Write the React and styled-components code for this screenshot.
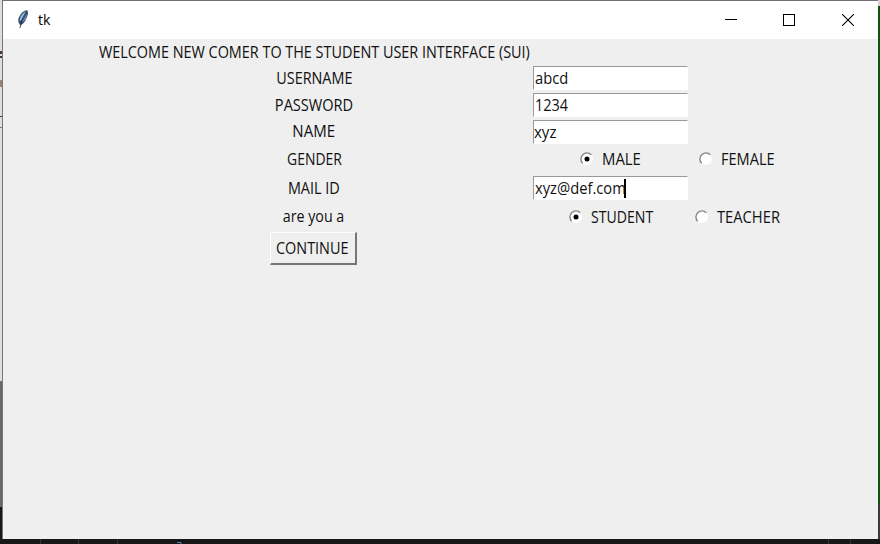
import React from "react";
import styled, { createGlobalStyle } from "styled-components";

const GlobalStyle = createGlobalStyle`
  * { box-sizing: border-box; }
  body { margin: 0; overflow: hidden; background: #171717; font-family: "Open Sans", "Noto Sans", sans-serif; }
`;

const Desktop = styled.div`
  display: grid;
  grid-template-columns: 3px 875px 2px;
  grid-template-rows: 539px 5px;
  width: 880px;
  height: 544px;
  background: #171717;
`;

const LeftEdge = styled.div`
  border-right: 1px solid #777;
  background: linear-gradient(#dedede 0 51px, #51304f 51px 54px, #dedede 54px 56px, #51304f 56px 58px, #dedede 58px 80px, #9b8573 80px 87px, #dedede 87px 116px, #333 116px 117px, #dedede 117px 127px, #777 127px 128px, #dedede 128px 381px, #686868 381px 507px, #171717 507px);
`;

const RightEdge = styled.div`
  background: linear-gradient(#d5d0d0 0 6px, #0c5412 6px 505px, #3b3b3b 505px);
`;

const BottomEdge = styled.div`
  grid-column: 1 / -1;
  svg { display: block; }
`;

const Window = styled.main`
  display: flex;
  flex-direction: column;
  border-top: 1px solid #737073;
  background: #efefef;
`;

const TitleBar = styled.header`
  display: flex;
  align-items: center;
  height: 38px;
  padding-left: 12px;
  background: #fff;
  color: #000;
`;

const Title = styled.span`
  margin-left: 8px;
  font-size: 14px;
  line-height: 20px;
`;

const Controls = styled.div`
  display: flex;
  margin-left: auto;
  margin-right: 1px;
`;

const ControlButton = styled.button`
  display: grid;
  place-items: center;
  width: 58.5px;
  height: 38px;
  padding: 0;
  border: 0;
  background: transparent;
`;

const Form = styled.form`
  display: grid;
  grid-template-columns: 434px 159px 95px;
  grid-template-rows: 26px 26px 28px 25px 30px 28px 29px 34px;
  place-items: center;
  margin-left: 94px;
`;

const Text = styled.span`
  display: block;
  flex: none;
  color: #111;
  font-size: 16px;
  line-height: 20px;
  white-space: nowrap;
  transform: scaleX(${(p) => p.$squeeze || 0.9});
  transform-origin: ${(p) => (p.$left ? "left" : "center")};
`;

const Label = styled(Text)`
  grid-column: 1;
  margin-top: -1px;
`;

const Entry = styled.div`
  grid-column: 2;
  display: flex;
  align-items: center;
  width: 155px;
  height: 24px;
  padding-left: ${(p) => p.$pad ?? 1}px;
  border: 1px solid #fff;
  border-top-color: #999;
  border-left-color: #999;
  background: #fff;
`;

const TextCursor = styled.i`
  width: 2px;
  height: 19px;
  margin-left: ${(p) => p.$offset}px;
  background: #000;
`;

const Option = styled.div`
  display: flex;
  align-items: center;
  justify-self: start;
  gap: 8px;
  margin-left: ${(p) => p.$indent}px;
`;

const ContinueButton = styled.button`
  display: grid;
  place-items: center;
  width: 87px;
  height: 33px;
  margin-right: 2px;
  padding: 0;
  border: 1px solid #fff;
  border-right: 2px solid #777;
  border-bottom: 2px solid #777;
  background: #efefef;
  font-family: inherit;
`;

const Feather = () => (
  <svg width="15" height="22" viewBox="0 0 15 22">
    <path d="M5 16 Q2 12 4 8 Q7 2 12 1 Q14 3 12 8 Q10 14 6 16Z" fill="#34506f" />
    <path d="M4.5 12 Q5 6 11 2 L10 6 L7 11Z" fill="#9ab9dc" />
    <path d="M6.5 14 L12 5 L11 10Z" fill="#6c91c0" />
    <path d="M11 3 Q6 10 5 19" fill="none" stroke="#172338" strokeWidth="0.8" />
  </svg>
);

const RadioMark = ({ checked }) => (
  <svg width="14" height="14" viewBox="0 0 14 14">
    <circle cx="7" cy="7" r="6" fill="#fff" />
    <path d="M2.7 11.3 A6 6 0 0 1 11.3 2.7" fill="none" stroke="#858585" strokeWidth="1.4" />
    {checked && <circle cx="7" cy="7" r="2.5" fill="#000" />}
  </svg>
);

const Radio = ({ children, checked, indent, squeeze }) => (
  <Option role="radio" aria-checked={!!checked} $indent={indent}>
    <RadioMark checked={checked} />
    <Text $left $squeeze={squeeze}>{children}</Text>
  </Option>
);

export default function App() {
  return (
    <>
      <GlobalStyle />
      <Desktop>
        <LeftEdge />
        <Window>
          <TitleBar>
            <Feather />
            <Title>tk</Title>
            <Controls>
              <ControlButton aria-label="Minimize">
                <svg width="12" height="12"><path d="M0 5.5H12" stroke="#000" /></svg>
              </ControlButton>
              <ControlButton aria-label="Maximize">
                <svg width="12" height="12"><rect x=".5" y=".5" width="11" height="11" fill="none" stroke="#000" /></svg>
              </ControlButton>
              <ControlButton aria-label="Close">
                <svg width="12" height="12"><path d="M0 0L12 12M12 0L0 12" stroke="#000" strokeWidth="1.1" /></svg>
              </ControlButton>
            </Controls>
          </TitleBar>
          <Form>
            <Label>WELCOME NEW COMER TO THE STUDENT USER INTERFACE (SUI)</Label>
            <Label>USERNAME</Label>
            <Entry><Text $left $squeeze={0.92}>abcd</Text></Entry>
            <Label $squeeze={0.91}>PASSWORD</Label>
            <Entry><Text $left>1234</Text></Entry>
            <Label $squeeze={0.94}>NAME</Label>
            <Entry $pad={0}><Text $left $squeeze={0.94}>xyz</Text></Entry>
            <Label $squeeze={0.87}>GENDER</Label>
            <Radio checked indent={48.5} squeeze={0.93}>MALE</Radio>
            <Radio indent={8.5} squeeze={0.91}>FEMALE</Radio>
            <Label>MAIL ID</Label>
            <Entry $pad={0.5}><Text $left $squeeze={0.92}>xyz@def.com</Text><TextCursor $offset={-9} /></Entry>
            <Label $squeeze={0.89}>are you a</Label>
            <Radio checked indent={37.5} squeeze={0.88}>STUDENT</Radio>
            <Radio indent={4.5} squeeze={0.92}>TEACHER</Radio>
            <ContinueButton type="button"><Text>CONTINUE</Text></ContinueButton>
          </Form>
        </Window>
        <RightEdge />
        <BottomEdge>
          <svg width="880" height="5">
            <path d="M40.5 0V5M78.5 0V5M117.5 0V5M828.5 0V5M850.5 0V5" stroke="#343434" />
            <path d="M177 3.5H181V5" fill="none" stroke="#4b86b4" />
          </svg>
        </BottomEdge>
      </Desktop>
    </>
  );
}
